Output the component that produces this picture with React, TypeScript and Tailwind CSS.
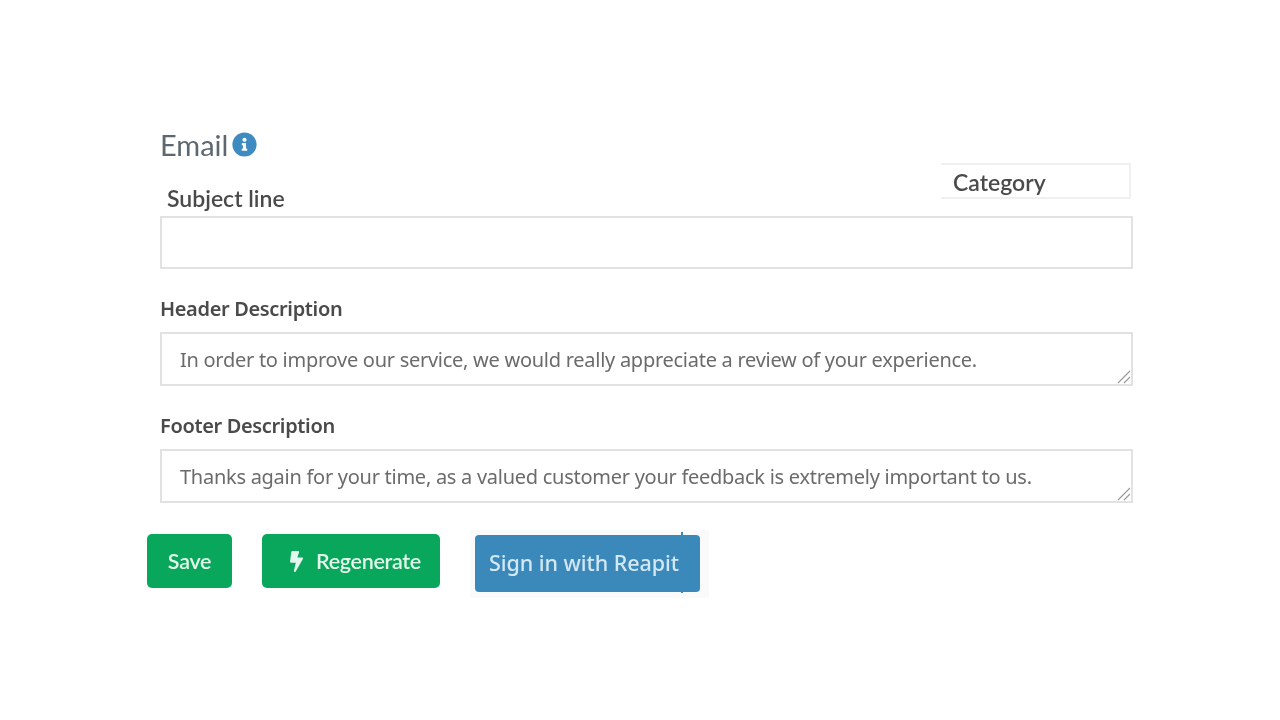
import { FaBolt, FaInfoCircle } from 'react-icons/fa'

const font = { sans: "font-['Noto_Sans',sans-serif]", lato: "font-['Lato',sans-serif]" }

function Field({ label, value }: { label: string; value: string }) {
  return (
    <div className="mt-[26px]">
      <label className={`block text-[20px] leading-[28px] font-semibold text-[#4a4a4a] tracking-[-0.35px] ${font.sans}`}>
        {label}
      </label>
      <div className="relative mt-[9px]">
        <textarea
          readOnly
          defaultValue={value}
          className={`block w-full h-[54px] overflow-hidden resize-none border-2 border-[#e2e2e2] bg-white pl-[18px] pr-[10px] py-[12px] text-[20px] leading-[28px] text-[#6b6b6b] tracking-[-0.27px] outline-none ${font.sans}`}
        />
        <svg className="absolute right-[2px] bottom-[2px] w-[14px] h-[14px]" viewBox="0 0 14 14" fill="none" stroke="#9a9a9a" strokeWidth="1.2">
          <path d="M1 13 13 1M7 13l6-6" />
        </svg>
      </div>
    </div>
  )
}

export default function App() {
  return (
    <div className="min-h-[720px] bg-white pt-[128px] pl-[147px] blur-[0.5px]">
      <div className="pl-[13px] w-[986px]">
        <div className={`flex items-center gap-[4px] h-[34px] text-[29px] text-[#5c6770] ${font.lato}`}>
          <span>Email</span>
          <FaInfoCircle className="text-[#3d8bc0] w-[25px] h-[25px] -translate-y-px" />
        </div>

        <div className="flex items-end justify-between h-[54px]">
          <span className={`pl-[7px] pb-[4px] text-[23px] leading-[28px] font-semibold text-[#4a4a4a] ${font.lato}`}>Subject line</span>
          <div className={`w-[190px] h-[36px] mb-[17px] mr-[2px] pl-[12px] border-t-2 border-b-2 border-r-2 border-[#f0f0f0] text-[23px] leading-[35px] font-semibold text-[#4a4a4a] ${font.lato}`}>
            Category
          </div>
        </div>

        <input readOnly className="block w-full h-[53px] border-2 border-[#e2e2e2] bg-white outline-none" />

        <Field
          label="Header Description"
          value="In order to improve our service, we would really appreciate a review of your experience."
        />
        <Field
          label="Footer Description"
          value="Thanks again for your time, as a valued customer your feedback is extremely important to us."
        />
      </div>

      <div className="mt-[27px] flex items-start">
        <button className={`mt-[4px] w-[85px] h-[54px] rounded-[5px] bg-[#09a75b] text-[21.5px] font-semibold tracking-[-0.3px] text-[#e4f7ec] ${font.lato}`}>
          Save
        </button>
        <button className={`mt-[4px] ml-[30px] w-[178px] h-[54px] rounded-[5px] bg-[#09a75b] flex items-center pl-[28px] gap-[13px] text-[21.5px] font-semibold tracking-[-0.3px] text-[#e4f7ec] ${font.lato}`}>
          <FaBolt className="w-[13px] h-[21px]" />
          <span>Regenerate</span>
        </button>
        <div className="ml-[30px] w-[239px] h-[68px] bg-[#fafafa] pl-[5px] pt-[5px]">
          <button className={`relative w-[225px] h-[57px] rounded-[4px] bg-[#3b88ba] text-left pl-[14px] text-[21.5px] tracking-[-0.05px] font-medium text-[#d3e8f3] ${font.sans}`}>
            Sign in with Reapit
            <span className="absolute left-[206px] top-[-3px] w-[2px] h-[3px] bg-[#3b88ba]" />
            <span className="absolute left-[206px] bottom-[-1px] w-[2px] h-[1px] bg-[#3b88ba]" />
          </button>
        </div>
      </div>
    </div>
  )
}
